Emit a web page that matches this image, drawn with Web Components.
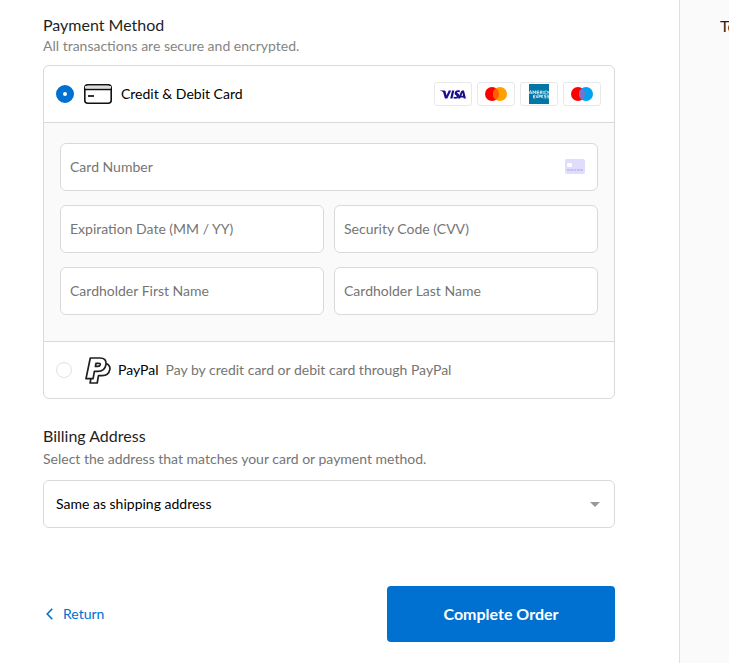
<!DOCTYPE html>
<html lang="en">
<head>
<meta charset="utf-8">
<meta name="viewport" content="width=device-width, initial-scale=1">
<title>Checkout</title>
<style>
  html, body { margin: 0; min-height: 100%; }
  body {
    --line: #d9d9d9;
    --soft: #fafafa;
    --muted: #757575;
    --accent: #0070d1;
    background: #fff;
    color: #000;
    font: 14px/20px Lato, "Liberation Sans", sans-serif;
  }
</style>
</head>
<body>
<checkout-page>
  <section-heading class="payment">
    Payment Method
    <span slot="note">All transactions are secure and encrypted.</span>
  </section-heading>
  <payment-options></payment-options>
  <section-heading class="billing">
    Billing Address
    <span slot="note">Select the address that matches your card or payment method.</span>
  </section-heading>
  <address-select></address-select>
  <checkout-actions></checkout-actions>
  <order-summary slot="aside">To</order-summary>
</checkout-page>

<script>
  function define(name, html, setup) {
    const template = document.createElement('template');
    template.innerHTML = '<style>*{box-sizing:border-box}</style>' + html;
    customElements.define(name, class extends HTMLElement {
      constructor() {
        super();
        this.attachShadow({ mode: 'open' }).append(template.content.cloneNode(true));
      }
      connectedCallback() {
        if (setup) setup(this, this.shadowRoot);
      }
    });
  }

  define('checkout-page', `
    <style>
      :host { display: grid; grid-template-columns: minmax(0, 1fr) 50px; min-height: 100vh; }
      main { padding: 15px 64px 20px 43px; }
      ::slotted(.payment) { --note: #858585; }
      ::slotted(.billing) { margin-top: 27px; --gap: 3px; --after: 11px; }
    </style>
    <main><slot></slot></main>
    <slot name="aside"></slot>`);

  define('order-summary', `
    <style>
      :host { display: block; overflow: hidden; white-space: nowrap; padding: 16px 0 0 40px;
        background: var(--soft); border-left: 1px solid #dedede; color: #1f1f1f; font-size: 16px; }
    </style>
    <slot></slot>`);

  define('section-heading', `
    <style>
      :host { display: grid; gap: var(--gap, 1px); padding-bottom: var(--after, 9px); }
      h2 { margin: 0; font-size: 16px; line-height: 20px; font-weight: 400; color: #1f1f1f; }
      p { margin: 0; color: var(--note, var(--muted)); line-height: 20px; }
    </style>
    <h2><slot></slot></h2>
    <p><slot name="note"></slot></p>`);

  define('text-field', `
    <style>
      :host { display: flex; align-items: center; height: 48px; padding: 0 12px 2px 0;
        background: #fff; border: 1px solid var(--line); border-radius: 6px; }
      :host(:focus-within) { border-color: var(--accent); }
      input { flex: 1; min-width: 0; height: 100%; padding: 0 0 0 9px; border: 0; outline: 0;
        background: none; color: #000; font: inherit; }
      input::placeholder { color: var(--muted); opacity: 1; }
    </style>
    <input type="text">
    <slot></slot>`, (host, root) => {
      const input = root.querySelector('input');
      input.placeholder = host.getAttribute('label');
      input.setAttribute('aria-label', host.getAttribute('label'));
      input.autocomplete = host.getAttribute('fill');
    });

  define('brand-badge', `
    <style>
      :host { display: grid; place-items: center; width: 38px; height: 24px;
        border: 1px solid #e8e8e8; border-radius: 3px; background: #fff; }
    </style>
    <slot></slot>`);

  define('payment-options', `
    <style>
      :host { display: block; border: 1px solid var(--line); border-radius: 6px; background: #fff; overflow: hidden; }
      svg { display: block; }
      .row { display: flex; align-items: center; height: 56px; padding: 0 13px 0 12px; }
      .row label { display: flex; align-items: center; flex: 1; min-width: 0; }
      input[type=radio] { appearance: none; flex: none; width: 16px; height: 16px; margin: 0 13px 0 0;
        border: 1px solid #e0e0e8; border-radius: 50%; background: #fff; }
      input[type=radio]:checked { width: 18px; height: 18px; margin: 0 10px 0 0; border: 7px solid var(--accent); }
      .card-icon { margin-right: 9px; }
      .pp-icon { margin-right: 7px; }
      .hint { margin-left: 7px; color: var(--muted); }
      .brands { display: flex; gap: 5px; }
      .fields { display: grid; grid-template-columns: 1fr 1fr; gap: 14px 10px; padding: 20px 16px 26px;
        background: var(--soft); border: solid var(--line); border-width: 1px 0; }
      .wide { grid-column: 1 / -1; }
    </style>
    <div class="row">
      <label>
        <input type="radio" name="method" value="card" checked>
        <svg class="card-icon" width="28" height="20" viewBox="0 0 28 20" fill="none" aria-hidden="true">
          <rect x=".8" y=".8" width="26.400" height="18.400" rx="3" stroke="#111" stroke-width="1.600"/>
          <path d="M1 3.300h26" stroke="#ddd" stroke-width="2.600"/>
          <path d="M1 5.500h26" stroke="#111" stroke-width="1.300"/>
          <path d="M4 12h6" stroke="#333" stroke-width="2"/>
        </svg>
        Credit &amp; Debit Card
      </label>
      <div class="brands">
        <brand-badge>
          <svg width="26" height="9" viewBox="0 0 26 9" fill="#1a0f91" role="img" aria-label="Visa">
            <path d="M0 .4h4.300c.7 0 1.100.3 1.300 1l.9 4L8.700.4h2.500L7.300 8.600H4.900L3.100 2.300C2.600 1.300 1.300.9 0 .7z"/>
            <path d="M12 .4h2.300l-1.800 8.200h-2.300zM20 .6l-.5 1.800c-1.300-.6-2.500-.5-2.500.1 0 .8 2.400 1.100 2.200 3.200-.2 2.600-3.200 3.500-5.800 2.600l.5-1.900c1.200.7 2.900.7 2.900-.2 0-.9-2.200-1.100-2.200-3C14.700.2 17.700-.4 20 .6z"/>
            <path fill-rule="evenodd" d="M22.300.4H24l1.900 8.200h-2.200l-.3-1.200h-2.700l-.6 1.200h-2.300l3.500-7.500c.2-.5.500-.7 1-.7zm.2 2.400l-1.100 2.900H23z"/>
          </svg>
        </brand-badge>
        <brand-badge>
          <svg width="22" height="14" viewBox="0 0 22 14" role="img" aria-label="Mastercard">
            <circle cx="7" cy="7" r="7" fill="#f00"/><circle cx="15" cy="7" r="7" fill="#ff9f00"/>
            <path d="M11 1.260a7 7 0 0 1 0 11.480a7 7 0 0 1 0-11.480z" fill="#ff5f00"/>
          </svg>
        </brand-badge>
        <brand-badge>
          <svg width="20" height="20" viewBox="0 0 20 20" role="img" aria-label="American Express">
            <path d="M0 0h20v20H0z" fill="#0077a6"/>
            <path d="M0 10l1.500-3.500L3 10M.7 9h1.700M4 10V6.700l1.300 2.300 1.300-2.300V10M10 7H8v3h2M8 8.500h2M11.200 10V7h1.600v1.500h-1.600l1.600 1.500M14.200 6.800V10M17.800 7h-2v3h2M18.800 10V7l1.200 2M6.300 11.200H4.500v2.800h1.800M4.500 12.600h1.600M7 11.200l2 2.800M9 11.200L7 14M10 14v-2.800h1.600v1.400H10M12.700 14v-2.800h1.500L12.700 12.600l1.600 1.400M17 11.200h-1.500v1.400H17V14h-1.600M20 11.200h-1.700v1.400H20V14h-1.700" fill="none" stroke="#e5f4fa" stroke-width=".8"/>
          </svg>
        </brand-badge>
        <brand-badge>
          <svg width="22" height="14" viewBox="0 0 22 14" role="img" aria-label="Maestro">
            <circle cx="7" cy="7" r="7" fill="#f00"/><circle cx="15" cy="7" r="7" fill="#00a2f0"/>
            <path d="M11 1.260a7 7 0 0 1 0 11.480a7 7 0 0 1 0-11.480z" fill="#7673c8"/>
          </svg>
        </brand-badge>
      </div>
    </div>
    <div class="fields">
      <text-field class="wide" label="Card Number" fill="cc-number">
        <svg width="20" height="15" viewBox="0 0 20 15" aria-hidden="true">
          <rect width="20" height="15" rx="2" fill="#e0dcfb"/>
          <rect x="2" y="4" width="5" height="4" rx="1" fill="#fff"/>
          <path d="M2 11h16" stroke="#bcb4ef" stroke-width="1.500" stroke-dasharray="2.600 .7"/>
        </svg>
      </text-field>
      <text-field label="Expiration Date (MM / YY)" fill="cc-exp"></text-field>
      <text-field label="Security Code (CVV)" fill="cc-csc"></text-field>
      <text-field label="Cardholder First Name" fill="cc-given-name"></text-field>
      <text-field label="Cardholder Last Name" fill="cc-family-name"></text-field>
    </div>
    <div class="row">
      <label>
        <input type="radio" name="method" value="paypal">
        <svg class="pp-icon" width="26" height="27" viewBox="0 0 26 27" fill="none" stroke="#1f1f1f" stroke-width="1.700" stroke-linejoin="round" aria-hidden="true">
          <path d="M5.300 1h9.700c4.300 0 6.600 2.400 6 6.300-.7 4.700-3.800 7-8.500 7H9.400L8.100 21.700H1z"/>
          <path d="M11 6.300h2.900c1.200 0 1.500.6 1.300 1.500-.3 1.200-1.100 1.600-2.300 1.600h-2.500z"/>
          <path d="M21.200 6.400c3 1.400 4.200 3.600 3.600 6.200-.8 4-3.600 6-7.600 6h-3.700L12.200 26H5.100l.7-4.100"/>
        </svg>
        <span>PayPal</span><span class="hint">Pay by credit card or debit card through PayPal</span>
      </label>
    </div>`);

  define('address-select', `
    <style>
      :host { display: grid; align-items: center; }
      select, svg { grid-area: 1 / 1; }
      select { appearance: none; width: 100%; height: 48px; padding: 0 40px 0 12px; border: 1px solid var(--line);
        border-radius: 6px; background: #fff; color: #000; font: inherit; }
      svg { justify-self: end; margin-right: 15px; pointer-events: none; }
    </style>
    <select aria-label="Billing Address">
      <option>Same as shipping address</option>
    </select>
    <svg width="10" height="5" viewBox="0 0 10 5" aria-hidden="true"><path d="M0 0h10L5 5z" fill="#999"/></svg>`);

  define('checkout-actions', `
    <style>
      :host { display: flex; align-items: center; justify-content: space-between; gap: 16px; margin-top: 58px; }
      a { display: flex; align-items: center; gap: 10px; padding-left: 3px; color: var(--accent); text-decoration: none; }
      button { width: 228px; height: 56px; border: 0; border-radius: 4px; background: var(--accent); color: #fff;
        font: inherit; font-size: 16px; font-weight: 700; }
    </style>
    <a href="#shipping">
      <svg width="7" height="12" viewBox="0 0 7 12" fill="none" stroke="currentColor" stroke-width="1.600" aria-hidden="true"><path d="M6.300.7L1.200 6l5.100 5.300"/></svg>
      Return
    </a>
    <button type="button">Complete Order</button>`);
</script>
</body>
</html>
